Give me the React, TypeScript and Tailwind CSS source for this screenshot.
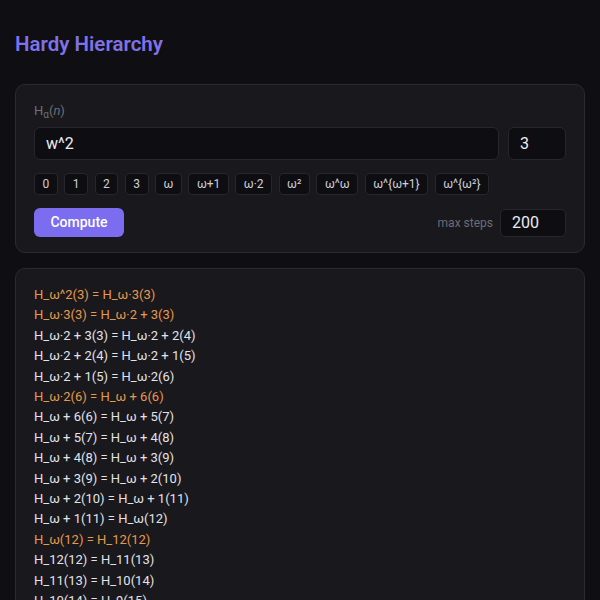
const presets = ['0', '1', '2', '3', 'ω', 'ω+1', 'ω·2', 'ω²', 'ω^ω', 'ω^{ω+1}', 'ω^{ω²}'];

const steps: { text: string; limit?: boolean }[] = [
  { text: 'H_ω^2(3) = H_ω·3(3)', limit: true },
  { text: 'H_ω·3(3) = H_ω·2 + 3(3)', limit: true },
  { text: 'H_ω·2 + 3(3) = H_ω·2 + 2(4)' },
  { text: 'H_ω·2 + 2(4) = H_ω·2 + 1(5)' },
  { text: 'H_ω·2 + 1(5) = H_ω·2(6)' },
  { text: 'H_ω·2(6) = H_ω + 6(6)', limit: true },
  { text: 'H_ω + 6(6) = H_ω + 5(7)' },
  { text: 'H_ω + 5(7) = H_ω + 4(8)' },
  { text: 'H_ω + 4(8) = H_ω + 3(9)' },
  { text: 'H_ω + 3(9) = H_ω + 2(10)' },
  { text: 'H_ω + 2(10) = H_ω + 1(11)' },
  { text: 'H_ω + 1(11) = H_ω(12)' },
  { text: 'H_ω(12) = H_12(12)', limit: true },
  { text: 'H_12(12) = H_11(13)' },
  { text: 'H_11(13) = H_10(14)' },
  { text: 'H_10(14) = H_9(15)' },
  { text: 'H_9(15) = H_8(16)' },
  { text: 'H_8(16) = H_7(17)' },
];

export default function App() {
  return (
    <div className="min-h-screen bg-[#0f0f13] px-[15px] pt-[30px] pb-8 font-['Roboto',sans-serif] text-[#e8e8ec]">
      <h1 className="text-[20.5px] leading-7 font-semibold text-[#7f72e8]">Hardy Hierarchy</h1>

      {/* Input panel */}
      <div className="mt-[26px] rounded-[10px] border border-[#2a2a31] bg-[#18181d] px-[18px] pt-[16px] pb-[15px]">
        <div className="text-[13px] leading-5 text-[#6f6f78]">
          H<sub className="text-[10px]">α</sub>(<i>n</i>)
        </div>
        <div className="mt-[6px] flex gap-[9px]">
          <input
            defaultValue="w^2"
            className="h-[33px] flex-1 rounded-[6px] border border-[#26262c] bg-[#0e0e12] px-[11px] text-[16px] text-[#ececf0] outline-none"
          />
          <input
            defaultValue="3"
            className="h-[33px] w-[58px] rounded-[6px] border border-[#26262c] bg-[#0e0e12] px-[11px] text-[16px] text-[#ececf0] outline-none"
          />
        </div>
        <div className="mt-[13px] flex flex-wrap gap-[6.5px]">
          {presets.map((p) => (
            <button
              key={p}
              className="h-[22px] rounded-[4px] border border-[#26262c] bg-[#0e0e12] px-[7.5px] text-[12px] leading-none text-[#cfcfd6]"
            >
              {p}
            </button>
          ))}
        </div>
        <div className="mt-[13px] flex items-center justify-between">
          <button className="h-[29px] w-[90px] rounded-[6px] bg-[#7b6cf0] text-[14px] font-medium text-white">
            Compute
          </button>
          <div className="flex items-center gap-[7px]">
            <span className="text-[12px] text-[#6c6c75]">max steps</span>
            <input
              defaultValue="200"
              className="h-[28px] w-[66px] rounded-[5px] border border-[#26262c] bg-[#0e0e12] px-[11px] text-[16px] text-[#ececf0] outline-none"
            />
          </div>
        </div>
      </div>

      {/* Trace output */}
      <div className="mt-[15px] rounded-[10px] border border-[#2a2a31] bg-[#18181d] px-[18px] pt-[16px] pb-4">
        {steps.map((s, i) => (
          <div
            key={i}
            className={`text-[13px] leading-[20.4px] ${s.limit ? 'text-[#e59a4c]' : 'text-[#e3e3e8]'}`}
          >
            {s.text}
          </div>
        ))}
      </div>
    </div>
  );
}
